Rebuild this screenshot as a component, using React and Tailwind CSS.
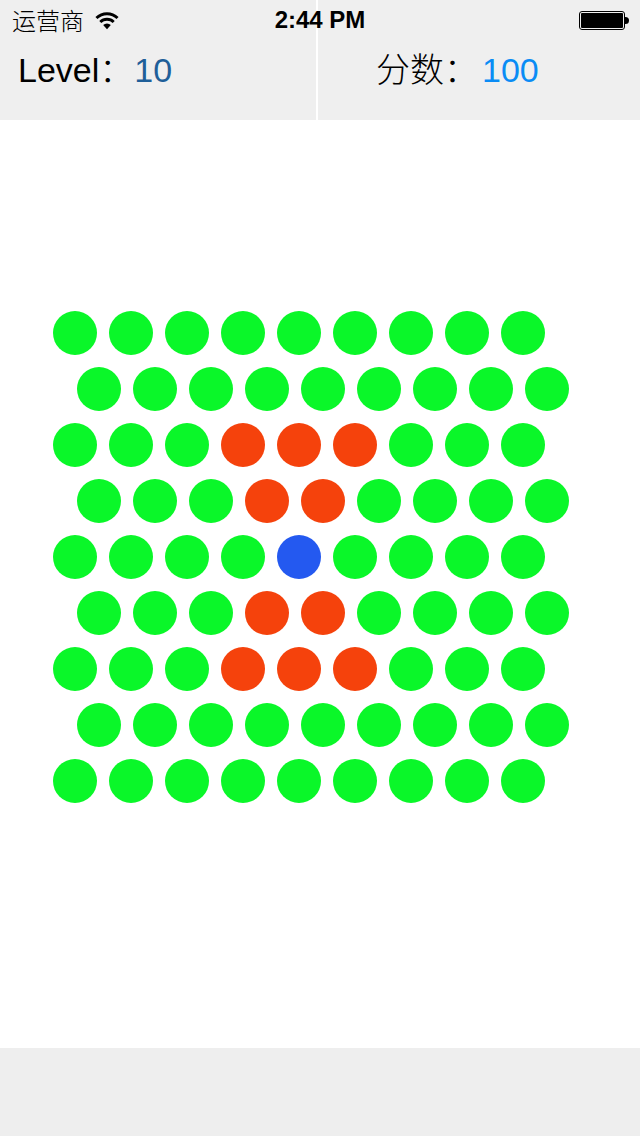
const GREEN = 'bg-[#0af729]';
const RED = 'bg-[#f5420c]';
const BLUE = 'bg-[#2459f0]';

// r = red, b = blue, anything else is green
const rows = [
  'ggggggggg',
  'ggggggggg',
  'gggrrrggg',
  'gggrrgggg',
  'ggggbgggg',
  'gggrrgggg',
  'gggrrrggg',
  'ggggggggg',
  'ggggggggg',
];

function Dot({ kind }) {
  const color = kind === 'r' ? RED : kind === 'b' ? BLUE : GREEN;
  return <div className={`w-11 h-11 rounded-full ${color}`} />;
}

function StatusBar() {
  return (
    <div className="absolute top-0 left-0 w-full h-10 flex items-center justify-between pl-3 pr-[11px] text-black">
      <div className="flex items-center gap-[11px]">
        <span className="text-[24px] leading-none font-light font-['Noto_Sans_CJK_SC',sans-serif]">运营商</span>
        <svg width="24" height="19" viewBox="0 0 25 19" fill="none" stroke="black">
          <path d="M1.5 7 A15.5 15.5 0 0 1 23.5 7" strokeWidth="3" />
          <path d="M5.5 11 A10 10 0 0 1 19.5 11" strokeWidth="3" />
          <path d="M12.5 18.5 L8.5 14.2 A5.8 5.8 0 0 1 16.5 14.2 Z" fill="black" stroke="none" />
        </svg>
      </div>
      <span className="absolute left-0 right-0 text-center text-[24px] leading-none font-bold font-['Liberation_Sans',sans-serif]">
        2:44 PM
      </span>
      <div className="flex items-center">
        <div className="w-[46px] h-[19px] rounded-[3px] border border-black p-px">
          <div className="w-full h-full rounded-[1px] bg-black" />
        </div>
        <div className="w-1 h-[7px] rounded-r-full bg-black" />
      </div>
    </div>
  );
}

export default function App() {
  return (
    <div className="relative w-[640px] h-[1136px] flex flex-col bg-white overflow-hidden font-['Liberation_Sans','Noto_Sans_CJK_SC',sans-serif]">
      <StatusBar />

      <div className="h-[120px] flex gap-0.5">
        <div className="w-[316px] bg-[#efefef] pt-[50px] pl-[18px] flex items-start text-[34px] leading-10 text-black">
          <span>Level</span>
          <span className="leading-9 font-light font-['Noto_Sans_CJK_SC',sans-serif]">：</span>
          <span className="ml-px text-[#1f5f99]">10</span>
        </div>
        <div className="flex-1 bg-[#efefef] pt-[50px] pl-[58px] flex items-start text-[34px] leading-10 text-black">
          <span className="leading-9 font-light font-['Noto_Sans_CJK_SC',sans-serif]">分数：</span>
          <span className="ml-1 text-[#0a8cf5]">100</span>
        </div>
      </div>

      <div className="flex-1 pt-[191px] pl-[53px] flex flex-col gap-3">
        {rows.map((row, i) => (
          <div key={i} className={`flex gap-3 ${i % 2 === 1 ? 'ml-6' : ''}`}>
            {row.split('').map((kind, j) => (
              <Dot key={j} kind={kind} />
            ))}
          </div>
        ))}
      </div>

      <div className="h-[88px] bg-[#eeeeee]" />
    </div>
  );
}
